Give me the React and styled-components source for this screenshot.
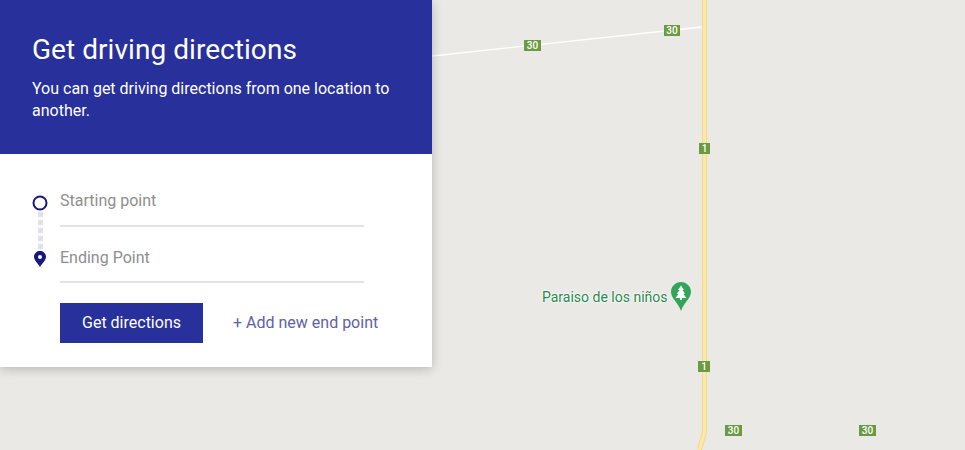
import React from 'react';
import styled, { createGlobalStyle } from 'styled-components';

const GlobalStyle = createGlobalStyle`
  html, body {
    margin: 0;
    padding: 0;
    background: #eae9e5;
    font-family: Roboto, "Liberation Sans", sans-serif;
  }
`;

const Page = styled.div`
  position: relative;
  width: 965px;
  height: 450px;
  overflow: hidden;
  background: #eae9e5;
`;

const RoadLayer = styled.svg`
  position: absolute;
  inset: 0;
`;

const Shield = styled.span`
  position: absolute;
  left: ${props => props.x}px;
  top: ${props => props.y}px;
  width: ${props => props.w}px;
  height: 11px;
  background: #6a9a42;
  color: #fff;
  font-size: 10px;
  font-weight: 500;
  line-height: 11px;
  text-align: center;
`;

const Place = styled.div`
  position: absolute;
  left: 542px;
  top: 282px;
  display: flex;
  align-items: flex-start;
  gap: 3px;
`;

const PlaceName = styled.span`
  margin-top: 7px;
  color: #27874f;
  font-size: 14px;
  line-height: 16px;
  white-space: nowrap;
  text-shadow: 0 0 2px #fff, 0 0 2px #fff, 0 0 2px #fff, 0 0 1px #fff;
`;

const Panel = styled.section`
  position: relative;
  width: 432px;
  background: #fff;
  box-shadow: 0 2px 10px rgba(0, 0, 0, 0.22);
`;

const Header = styled.header`
  box-sizing: border-box;
  height: 154px;
  padding: 32px 32px 0;
  background: #27309b;
  color: #fff;
`;

const Title = styled.h1`
  margin: 0 0 10px;
  font-size: 28px;
  font-weight: 400;
  line-height: 36px;
  letter-spacing: 0.05px;
`;

const Intro = styled.p`
  margin: 0;
  font-size: 16px;
  line-height: 22px;
`;

const Body = styled.div`
  box-sizing: border-box;
  padding: 17px 32px 24px;
`;

const RouteRow = styled.div`
  display: flex;
  gap: 12px;
`;

const RouteMarks = styled.div`
  flex: 0 0 16px;
  display: flex;
  flex-direction: column;
  align-items: center;
  padding-top: 24px;
`;

const Dots = styled.div`
  width: 5px;
  height: 38px;
  margin: 1px 0 1px;
  background: repeating-linear-gradient(to bottom, #e0dff0 0 5px, transparent 5px 8px);
`;

const Fields = styled.div`
  width: 304px;
`;

const Field = styled.input`
  display: block;
  box-sizing: border-box;
  width: 100%;
  height: 56px;
  padding: 6px 0 0;
  border: 0;
  border-bottom: 2px solid #e3e1ee;
  outline: 0;
  background: transparent;
  font-family: inherit;
  font-size: 16px;
  color: #333;

  &:first-child {
    padding-top: 4px;
  }

  &::placeholder {
    color: #8e8e8e;
    opacity: 1;
  }
`;

const Actions = styled.div`
  display: flex;
  align-items: center;
  gap: 30px;
  margin: 20px 0 0 28px;
`;

const SubmitButton = styled.button`
  width: 143px;
  height: 40px;
  padding: 0 0 1px;
  border: 0;
  border-radius: 0;
  background: #27309b;
  color: #fff;
  font-family: inherit;
  font-size: 16px;
  font-weight: 400;
`;

const AddLink = styled.a`
  margin-top: -2px;
  color: #5d62a8;
  font-size: 16px;
  white-space: nowrap;
`;

const shields = [
  { x: 524, y: 40, w: 17, label: '30' },
  { x: 664, y: 25, w: 16, label: '30' },
  { x: 699, y: 143, w: 11, label: '1' },
  { x: 698, y: 361, w: 12, label: '1' },
  { x: 725, y: 425, w: 17, label: '30' },
  { x: 859, y: 425, w: 17, label: '30' },
];

const TreePin = () => (
  <svg width="20" height="30" viewBox="0 0 20 30">
    <path d="M10 0C4.500 0 0 4.400 0 9.900c0 6.600 7.400 10.600 10 19.100 2.600-8.500 10-12.500 10-19.100C20 4.400 15.500 0 10 0z" fill="#34a459" />
    <path d="M10 3.500l3 4.600h-1.500l2.500 3.700h-1.700l3 4.200h-4.400V18H9v-2H4.600l3-4.200H5.900l2.600-3.700H7z" fill="#fff" />
  </svg>
);

const StartMark = () => (
  <svg width="16" height="16" viewBox="0 0 16 16">
    <circle cx="8" cy="8" r="6.500" fill="none" stroke="#17187a" strokeWidth="2" />
  </svg>
);

const EndMark = () => (
  <svg width="12" height="16" viewBox="0 0 12 16">
    <path fillRule="evenodd" d="M6 0C2.700 0 0 2.500 0 5.800 0 9.500 4.200 12.500 6 16c1.800-3.500 6-6.500 6-10.200C12 2.500 9.300 0 6 0zm0 4a2 2 0 1 1 0 4 2 2 0 0 1 0-4z" fill="#17187a" />
  </svg>
);

export default function App() {
  return (
    <Page>
      <GlobalStyle />
      <RoadLayer width="965" height="450" viewBox="0 0 965 450">
        <path d="M432 56L702 27" stroke="#fff" strokeWidth="1.300" fill="none" />
        <path d="M704.500 0V432L699.500 450" stroke="#f5d98a" strokeWidth="5" fill="none" />
        <path d="M704.500 0V432L699.500 450" stroke="#fde9a6" strokeWidth="3" fill="none" />
      </RoadLayer>
      {shields.map(s => (
        <Shield key={`${s.x}-${s.y}`} x={s.x} y={s.y} w={s.w}>{s.label}</Shield>
      ))}
      <Place>
        <PlaceName>Paraiso de los niños</PlaceName>
        <TreePin />
      </Place>
      <Panel>
        <Header>
          <Title>Get driving directions</Title>
          <Intro>You can get driving directions from one location to another.</Intro>
        </Header>
        <Body>
          <RouteRow>
            <RouteMarks>
              <StartMark />
              <Dots />
              <EndMark />
            </RouteMarks>
            <Fields>
              <Field placeholder="Starting point" />
              <Field placeholder="Ending Point" />
            </Fields>
          </RouteRow>
          <Actions>
            <SubmitButton>Get directions</SubmitButton>
            <AddLink>+ Add new end point</AddLink>
          </Actions>
        </Body>
      </Panel>
    </Page>
  );
}
